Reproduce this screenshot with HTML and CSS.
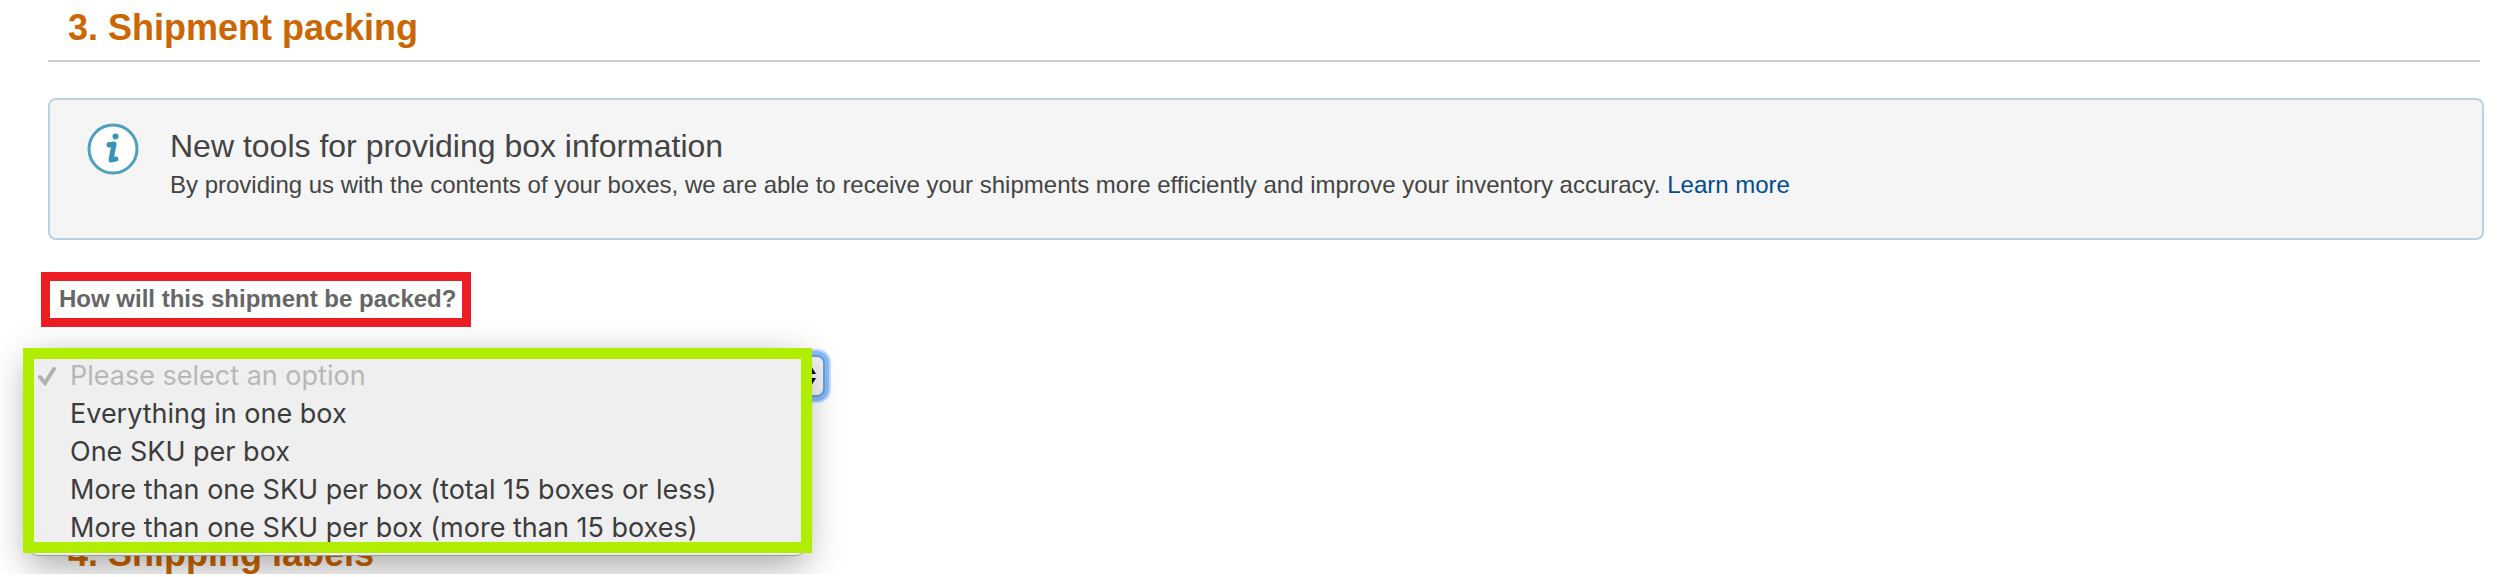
FILE: index.html
```html
<!DOCTYPE html>
<html lang="en">
  <head>
    <meta charset="utf-8" />
    <title>Shipment packing</title>
    <link rel="stylesheet" href="styles.css">
  </head>
  <body>
    <h2 class="section-title ruled">3. Shipment packing</h2>

    <div class="info-box">
      <svg class="info-icon" viewBox="0 0 52 52" aria-hidden="true">
        <circle cx="26" cy="26" r="24" fill="#fff" stroke="#4f9fbe" stroke-width="3" />
        <circle cx="28.500" cy="13.500" r="3" fill="#3a92b5" />
        <path d="M22 21.500h5L24 37M22 22l5-1M24 37l5-1" fill="none" stroke="#3a92b5" stroke-width="5" stroke-linecap="round" stroke-linejoin="round" />
      </svg>
      <div class="info-text">
        <h3>New tools for providing box information</h3>
        <p>
          By providing us with the contents of your boxes, we are able to
          receive your shipments more efficiently and improve your inventory
          accuracy. <a href="#">Learn more</a>
        </p>
      </div>
    </div>

    <form class="packing-form">
      <label class="question" for="packing">How will this shipment be packed?</label>

      <div class="dropdown">
        <select id="packing" class="packing-select">
          <option>Please select an option</option>
          <option>Everything in one box</option>
          <option>One SKU per box</option>
          <option>More than one SKU per box (total 15 boxes or less)</option>
          <option>More than one SKU per box (more than 15 boxes)</option>
        </select>
        <svg class="arrows" viewBox="0 0 12 20" aria-hidden="true">
          <path d="M6 0l5 8H1zM6 20l5-8H1z" />
        </svg>

        <!-- open menu -->
        <ul class="menu" role="listbox" aria-label="Packing options">
          <li class="item placeholder" role="option" aria-selected="true">
            <svg class="check" viewBox="0 0 20 20" aria-hidden="true">
              <path d="M3 11l5 6 9-14" />
            </svg>
            Please select an option
          </li>
          <li class="item" role="option">Everything in one box</li>
          <li class="item" role="option">One SKU per box</li>
          <li class="item" role="option">More than one SKU per box (total 15 boxes or less)</li>
          <li class="item" role="option">More than one SKU per box (more than 15 boxes)</li>
        </ul>
      </div>
    </form>

    <h2 class="section-title">4. Shipping labels</h2>
  </body>
</html>
```
FILE: styles.css
```css
* {
  box-sizing: border-box;
}
body {
  margin: 0;
  padding: 8px 26px 0 48px;
  font-family: "Liberation Sans", Arial, sans-serif;
  color: #444;
  background-color: #fff;
}
.section-title {
  margin: 0;
  padding-left: 20px;
  font-size: 36px;
  line-height: 40px;
  color: #cc6600;
}
.ruled {
  margin-right: 4px;
  padding-bottom: 12px;
  border-bottom: 2px solid #ccc;
}
.info-box {
  display: flex;
  gap: 31px;
  margin-top: 36px;
  padding: 23px 36px 34px 37px;
  border: 2px solid #bad1df;
  border-radius: 8px;
  background-color: #f5f5f5;
}
.info-icon {
  flex: none;
  width: 52px;
  height: 52px;
}
.info-text h3 {
  margin: 0;
  padding-top: 3px;
  font-size: 32px;
  font-weight: normal;
  line-height: 40px;
}
.info-text p {
  margin: 0;
  font-size: 24px;
  line-height: 38px;
}
.info-text a {
  color: #004b91;
  text-decoration: none;
}
.packing-form {
  margin-bottom: 137px;
}
.question {
  display: block;
  width: fit-content;
  margin: 32px 0 0 -7px;
  padding: 4px 6px 5px 9px;
  border: 9px solid #ee1c25;
  font-size: 24px;
  font-weight: bold;
  line-height: 28px;
  color: #666;
}
.dropdown {
  position: relative;
  width: 777px;
  margin-top: 28px;
}
.packing-select {
  display: block;
  width: 100%;
  height: 42px;
  border: 2px solid #6c9fd6;
  border-radius: 8px;
  background-color: #f4f4f4;
  box-shadow: 0 0 0 4px #84bcfb, 0 0 0 6px #c3defc;
  font-size: 24px;
  appearance: none;
  outline: none;
}
.arrows {
  position: absolute;
  top: 11px;
  right: 8px;
  width: 12px;
  height: 20px;
}
.menu {
  position: absolute;
  top: -6px;
  left: -20px;
  width: 778px;
  margin: 0;
  padding: 8px 0;
  border-bottom: 1px solid #999;
  border-radius: 10px;
  background-color: #efefef;
  box-shadow: 0 10px 36px rgba(0, 0, 0, 0.35);
  list-style: none;
}
/* green frame round the open menu */
.menu::after {
  content: "";
  position: absolute;
  inset: -1px -6px 2px -5px;
  border: 11px solid #b0ed00;
}
.item {
  display: flex;
  align-items: center;
  padding-left: 42px;
  font-family: Inter, sans-serif;
  font-size: 27px;
  line-height: 38px;
  color: #3c3c3c;
}
.placeholder {
  padding-left: 9px;
  gap: 13px;
  color: #b6b8b8;
}
.check {
  width: 20px;
  height: 20px;
  fill: none;
  stroke: #b0b2b2;
  stroke-width: 4;
  stroke-linecap: round;
}
```
